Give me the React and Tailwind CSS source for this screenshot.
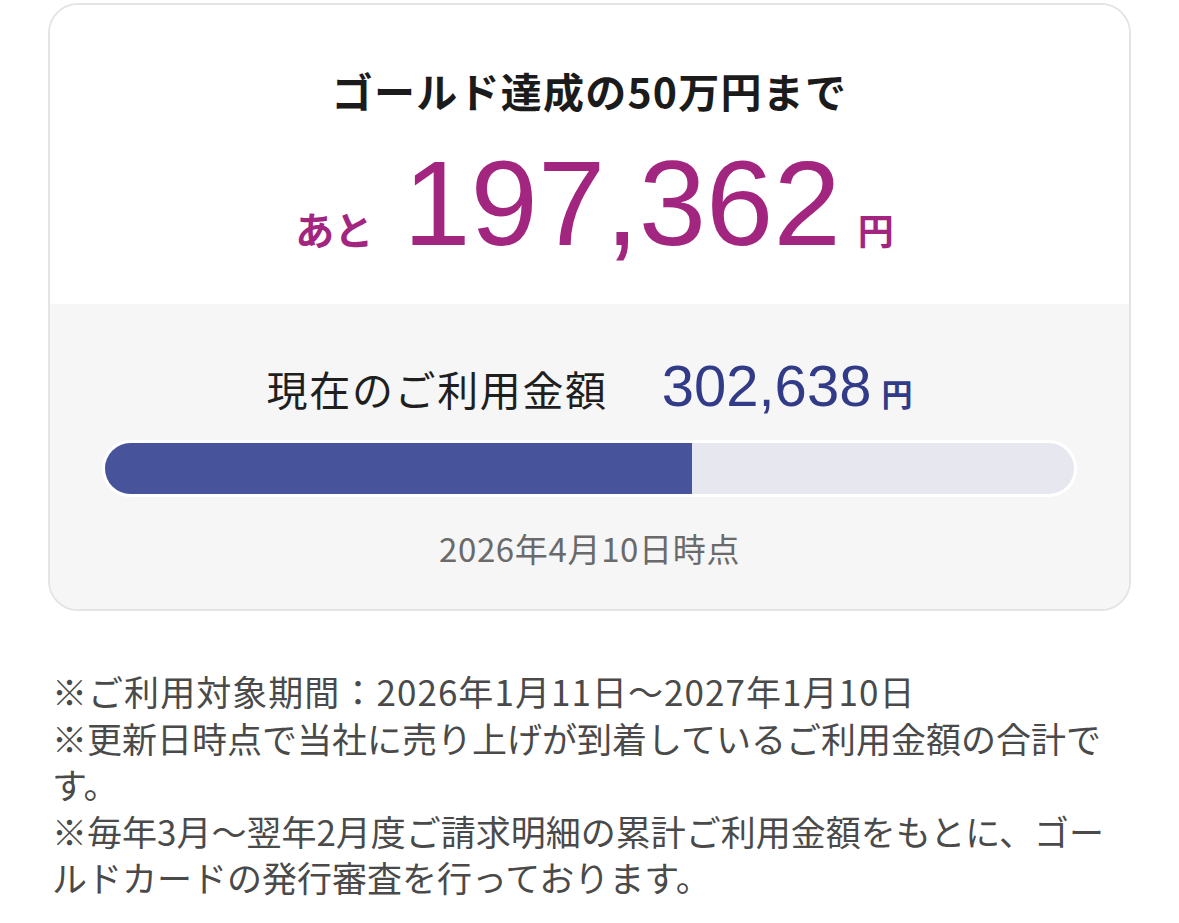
const TARGET = 500000
const CURRENT = 302638

const JP = { fontFamily: '"Noto Sans CJK JP", "Noto Sans", sans-serif' }
const NUM = { fontFamily: '"Liberation Sans", Arial, "Noto Sans CJK JP", sans-serif' }

function ProgressBar({ value, max }) {
  const pct = Math.min(100, (value / max) * 100)
  return (
    <div className="rounded-full border-[3px] border-white bg-[#e7e7f0] h-[57px] overflow-hidden">
      <div className="h-full bg-[#47549b]" style={{ width: `${pct}%` }} />
    </div>
  )
}

export default function App() {
  const remaining = (TARGET - CURRENT).toLocaleString('ja-JP')
  const current = CURRENT.toLocaleString('ja-JP')

  return (
    <div className="min-h-screen bg-white px-[48px] pt-[3px]" style={JP}>
      <div className="overflow-hidden rounded-[30px] border-2 border-[#e4e4e6]">
        <div className="flex h-[299px] flex-col items-center bg-white pt-[65px]">
          <h1 className="text-[41px] font-bold leading-none tracking-[0.03em] text-[#1b1b1b]">
            ゴールド達成の50万円まで
          </h1>
          <div className="mt-[32px] flex items-baseline pl-[10px] text-[#a2267f]">
            <span className="mr-[30px] text-[39px] font-bold">あと</span>
            <span className="text-[121px] leading-none" style={NUM}>
              {remaining}
            </span>
            <span className="ml-[17px] text-[36px] font-bold">円</span>
          </div>
        </div>

        <div className="flex h-[305px] flex-col bg-[#f6f6f7] px-[52px] pt-[53px]">
          <div className="flex items-baseline justify-center">
            <span className="text-[41px] leading-none tracking-[0.04em] text-[#1f1f1f]">
              現在のご利用金額
            </span>
            <span className="ml-[54px] text-[58px] leading-none text-[#313b87]" style={NUM}>
              {current}
            </span>
            <span className="ml-[10px] text-[31px] font-bold text-[#313b87]">円</span>
          </div>
          <div className="mt-[23px]">
            <ProgressBar value={CURRENT} max={TARGET} />
          </div>
          <p className="mt-[35px] text-center text-[33px] leading-none tracking-[0.02em] text-[#6a6a6a]">
            2026年4月10日時点
          </p>
        </div>
      </div>

      <div className="mt-[57px] pl-[4px] text-[35px] leading-[46.5px] whitespace-nowrap text-[#4a4a4a]">
        <p className="tracking-[0.03em]">※ご利用対象期間：2026年1月11日〜2027年1月10日</p>
        <p>
          ※更新日時点で当社に売り上げが到着しているご利用金額の合計で
          <br />
          す。
        </p>
        <p>
          ※毎年3月〜翌年2月度ご請求明細の累計ご利用金額をもとに、ゴー
          <br />
          ルドカードの発行審査を行っております。
        </p>
      </div>
    </div>
  )
}
